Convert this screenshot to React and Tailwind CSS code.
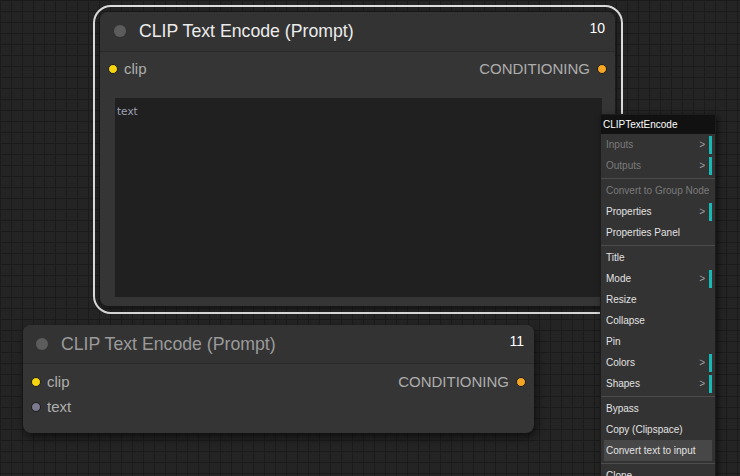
import React from 'react';

const sans = { fontFamily: '"Liberation Sans", Arial, sans-serif' };

const Dot = ({ color }) => (
  <span className={`shrink-0 block w-[10px] h-[10px] rounded-full border border-[#1a1a1a] ${color}`} />
);

const MenuItem = ({ label, disabled, sub, active }) => (
  <div
    className={`mx-[3px] pl-[2px] h-[21px] flex items-center whitespace-nowrap ${active ? 'bg-[#474747]' : ''} ${
      disabled ? 'text-[#7a7a7a]' : 'text-[#e2e2e2]'
    }`}
  >
    <span className="flex-1">{label}</span>
    {sub && (
      <>
        <span className="text-[#a0a0a0] mr-[4px]">&gt;</span>
        <span className="w-[3px] h-[18px] bg-[#17b8b8]" />
      </>
    )}
  </div>
);

const Sep = () => <div className="h-px bg-[#4c4c4c] my-[1.5px]" />;

const ContextMenu = () => (
  <div
    className="absolute left-[600px] top-[114px] w-[116px] bg-[#333333] border border-[#1c1c1c] shadow-[2px_2px_6px_rgba(0,0,0,0.6)] text-[10px]"
    style={sans}
  >
    <div className="h-[19px] bg-[#111] text-white flex items-center pl-[2px]">CLIPTextEncode</div>
    <MenuItem label="Inputs" disabled sub />
    <MenuItem label="Outputs" disabled sub />
    <Sep />
    <MenuItem label="Convert to Group Node" disabled />
    <MenuItem label="Properties" sub />
    <MenuItem label="Properties Panel" />
    <Sep />
    <MenuItem label="Title" />
    <MenuItem label="Mode" sub />
    <MenuItem label="Resize" />
    <MenuItem label="Collapse" />
    <MenuItem label="Pin" />
    <MenuItem label="Colors" sub />
    <MenuItem label="Shapes" sub />
    <Sep />
    <MenuItem label="Bypass" />
    <MenuItem label="Copy (Clipspace)" />
    <MenuItem label="Convert text to input" active />
    <Sep />
    <MenuItem label="Clone" />
  </div>
);

const TitleBar = ({ id, dim, h, pl }) => (
  <div className={`${h} ${pl} pr-[10px] flex items-start border-b border-[#2a2a2a] bg-[#333] rounded-t-[8px]`}>
    <div className="flex items-center self-center">
      <span className="w-[12px] h-[12px] rounded-full bg-[#5c5c5c]" />
      <span className={`ml-[13px] text-[17.7px] ${dim ? 'text-[#9a9a9a]' : 'text-[#ececec]'}`}>
        CLIP Text Encode (Prompt)
      </span>
    </div>
    <span className="ml-auto mt-[6px] text-[14px] text-white">{id}</span>
  </div>
);

export default function App() {
  return (
    <div
      className="relative w-[740px] h-[476px] overflow-hidden bg-[#242424] bg-[linear-gradient(to_right,#1b1b1b_1px,transparent_1px),linear-gradient(to_bottom,#1b1b1b_1px,transparent_1px)] bg-[size:11px_11px]"
      style={sans}
    >
      {/* selected node outline */}
      <div className="absolute left-[93px] top-[5px] w-[530px] h-[309px] rounded-[18px] border-2 border-[#dcdcdc]" />

      {/* node 10 */}
      <div className="absolute left-[100px] top-[12px] w-[515px] h-[294px] rounded-[8px] bg-[#353535] shadow-[0_2px_6px_rgba(0,0,0,0.5)] flex flex-col">
        <TitleBar id="10" h="h-[40px]" pl="pl-[14px]" />
        <div className="h-[24px] mt-[5px] flex items-center px-[8px] text-[15px] text-[#adadad]">
          <Dot color="bg-[#f5d40f]" />
          <span className="ml-[6px]">clip</span>
          <span className="ml-auto mr-[7px]">CONDITIONING</span>
          <Dot color="bg-[#f5a623]" />
        </div>
        <div className="mx-[15px] mt-[17px] w-[487px] h-[199px] bg-[#202020] pl-[2px] pt-[4px] leading-none">
          <span className="text-[10.5px] text-[#9ba0b2]" style={{ fontFamily: '"DejaVu Sans", sans-serif' }}>
            text
          </span>
        </div>
      </div>

      {/* node 11 */}
      <div className="absolute left-[23px] top-[325px] w-[511px] h-[108px] rounded-[8px] bg-[#353535] shadow-[2px_4px_8px_rgba(0,0,0,0.6)] flex flex-col">
        <TitleBar id="11" dim h="h-[39px]" pl="pl-[13px]" />
        <div className="pt-[6px] px-[8px] flex flex-col gap-[1px] text-[15px] text-[#adadad]">
          <div className="h-[24px] flex items-center">
            <Dot color="bg-[#f5d40f]" />
            <span className="ml-[6px]">clip</span>
            <span className="ml-auto mr-[7px]">CONDITIONING</span>
            <Dot color="bg-[#f5a623]" />
          </div>
          <div className="h-[24px] flex items-center">
            <Dot color="bg-[#7a7a8e]" />
            <span className="ml-[6px]">text</span>
          </div>
        </div>
      </div>

      <ContextMenu />
    </div>
  );
}
